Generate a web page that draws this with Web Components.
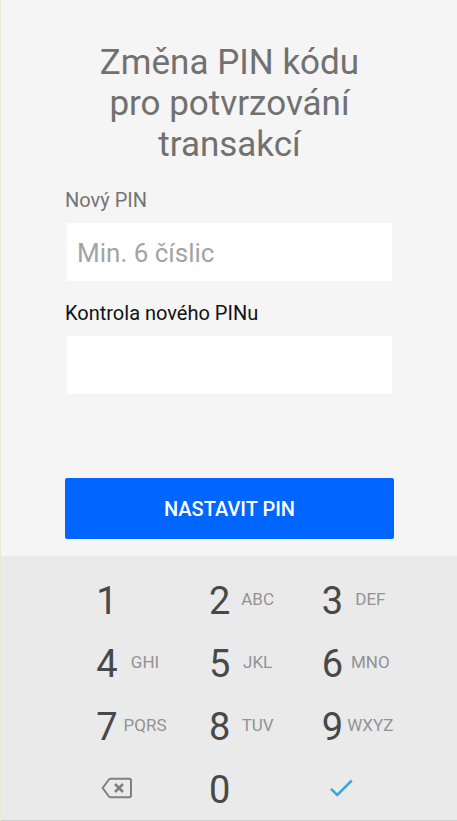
<!DOCTYPE html>
<html lang="cs">
<head>
<meta charset="utf-8">
<meta name="viewport" content="width=device-width, initial-scale=1">
<title>Změna PIN kódu</title>
<style>
  body { margin: 0; font-family: Roboto, "Noto Sans", sans-serif; }
</style>
</head>
<body>
<pin-screen>
  <pin-form>
    <span slot="title">Změna PIN kódu pro potvrzování transakcí</span>
    <pin-field label="Nový PIN" placeholder="Min. 6 číslic" muted></pin-field>
    <pin-field label="Kontrola nového PINu"></pin-field>
    <pin-submit slot="action">NASTAVIT PIN</pin-submit>
  </pin-form>
  <num-pad slot="keyboard"></num-pad>
</pin-screen>

<script>
function define(name, markup, setup) {
  customElements.define(name, class extends HTMLElement {
    constructor() {
      super();
      this.attachShadow({ mode: 'open' });
    }
    connectedCallback() {
      this.shadowRoot.innerHTML = markup;
      if (setup) setup(this, this.shadowRoot);
    }
  });
}

define('pin-screen', `
  <style>
    :host { display: flex; flex-direction: column; min-height: 100vh; box-sizing: border-box;
      background: #f5f5f5; border-left: 1px solid #ede8d6; }
    main { flex: 1; }
  </style>
  <main><slot></slot></main>
  <slot name="keyboard"></slot>`);

define('pin-form', `
  <style>
    :host { display: block; padding: 42px 63px 17px 64px; }
    h1 { margin: 0 0 23px; padding: 0 24px; font-size: 35px; line-height: 41px; font-weight: 400;
      text-align: center; color: #717171; }
    form { display: block; }
    .fields { display: grid; grid-template-columns: minmax(0, 1fr); gap: 20px; margin-bottom: 84px; }
  </style>
  <h1><slot name="title"></slot></h1>
  <form>
    <div class="fields"><slot></slot></div>
    <slot name="action"></slot>
  </form>`);

define('pin-field', `
  <style>
    :host { display: flex; flex-direction: column; gap: 11px; color: #111; }
    :host([muted]) { color: #747474; }
    label { font-size: 20px; line-height: 24px; }
    input { min-width: 0; height: 58px; margin: 0 2px; padding: 2px 10px 0; border: 0; border-radius: 0;
      outline: 0; box-sizing: border-box; background: #fff; color: #333;
      font: 26px Roboto, "Noto Sans", sans-serif; }
    input::placeholder { color: #a3a3a3; opacity: 1; }
  </style>
  <label for="pin"></label>
  <input id="pin" type="text" inputmode="numeric" autocomplete="off">`,
  (host, root) => {
    root.querySelector('label').textContent = host.getAttribute('label');
    root.querySelector('input').placeholder = host.getAttribute('placeholder') || '';
  });

define('pin-submit', `
  <style>
    :host { display: block; }
    button { width: 100%; height: 61px; padding: 0; border: 0; border-radius: 2px; background: #0066ff;
      color: #fff; font: 500 20px Roboto, "Noto Sans", sans-serif; cursor: pointer; }
  </style>
  <button type="button"><slot></slot></button>`);

define('num-key', `
  <style>
    :host { display: block; }
    button { display: flex; align-items: center; width: 100%; height: 60px; padding: 0 0 0 30px;
      border: 0; background: none; font-family: Roboto, "Noto Sans", sans-serif; cursor: pointer; }
    .digit { width: 24px; font-size: 38px; line-height: 44px; color: #484848; text-align: center; }
    .letters { width: 52px; padding-bottom: 4px; font-size: 17px; line-height: 20px; color: #929292;
      text-align: center; }
    ::slotted(svg) { display: block; margin: 0 0 4px 6px; }
  </style>
  <button type="button"></button>`,
  (host, root) => {
    const button = root.querySelector('button');
    const digit = host.getAttribute('digit');
    if (digit === null) {
      button.setAttribute('aria-label', host.getAttribute('label'));
      button.append(document.createElement('slot'));
      return;
    }
    for (const name of ['digit', 'letters']) {
      const span = document.createElement('span');
      span.className = name;
      span.textContent = host.getAttribute(name) || '';
      button.append(span);
    }
  });

define('num-pad', `
  <style>
    :host { display: grid; grid-template-columns: repeat(3, minmax(0, 1fr)); gap: 3px 0;
      padding: 15px 54px 0 64px; background: #eaeaea; border-bottom: 1px solid #cfcfcf; }
  </style>
  <num-key digit="1"></num-key>
  <num-key digit="2" letters="ABC"></num-key>
  <num-key digit="3" letters="DEF"></num-key>
  <num-key digit="4" letters="GHI"></num-key>
  <num-key digit="5" letters="JKL"></num-key>
  <num-key digit="6" letters="MNO"></num-key>
  <num-key digit="7" letters="PQRS"></num-key>
  <num-key digit="8" letters="TUV"></num-key>
  <num-key digit="9" letters="WXYZ"></num-key>
  <num-key label="Smazat">
    <svg width="32" height="22" viewBox="0 0 32 22" fill="none" stroke="#808080" stroke-width="2">
      <path d="M9.5 1.7H28.2Q30 1.7 30 3.5V18.5Q30 20.3 28.2 20.3H9.5Q8.5 20.3 7.9 19.5L1.7 11L7.9 2.5Q8.5 1.7 9.5 1.7Z"/>
      <path d="M14 7L22 15M22 7L14 15" stroke-width="2.5"/>
    </svg>
  </num-key>
  <num-key digit="0"></num-key>
  <num-key label="Potvrdit">
    <svg width="32" height="22" viewBox="0 0 32 22" fill="none" stroke="#38a5e4" stroke-width="2.5">
      <path d="M5 11.8L11.3 18L25.8 3.5"/>
    </svg>
  </num-key>`);
</script>
</body>
</html>
